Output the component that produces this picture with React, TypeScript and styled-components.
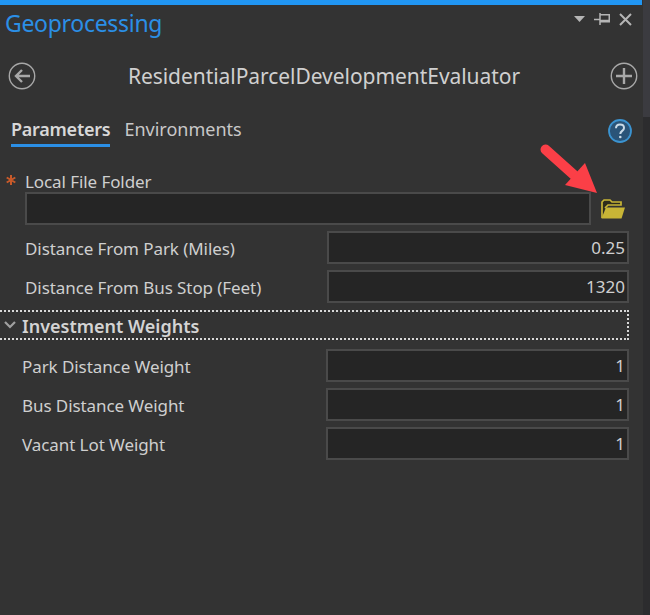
import React from "react";
import styled, { createGlobalStyle } from "styled-components";

const Global = createGlobalStyle`
  html, body { margin: 0; padding: 0; background: #333333; }
  body { font-family: "Noto Sans", "Open Sans", sans-serif; }
`;

const Window = styled.div`
  width: 650px; height: 615px; display: flex; overflow: hidden; background: #333; position: relative;
`;
const Pane = styled.div`
  width: 642px; height: 615px; flex: none; display: flex; flex-direction: column;
`;
const Gutter = styled.div`
  flex: 1; display: flex; flex-direction: column; padding-left: 1px;
`;
const GutterTop = styled.div`
  height: 117px; background: #3b3b40;
`;
const GutterBottom = styled.div`
  flex: 1; background: #2c2c2e;
`;
const TopBar = styled.div`
  height: 5px; background: #2196f3; flex: none;
`;
const TitleRow = styled.div`
  height: 36px; display: flex; align-items: center; justify-content: space-between;
  padding: 0 10px 0 5px; flex: none;
`;
const Title = styled.div`
  color: #2b8fe6; font-size: 23px; letter-spacing: -0.3px; line-height: 36px;
`;
const WindowTools = styled.div`
  display: flex; align-items: center; gap: 9px; margin-bottom: 8px;
`;
const ToolHeader = styled.div`
  height: 70px; display: flex; align-items: center; justify-content: space-between;
  padding: 0 4px 0 8px; flex: none;
`;
const ToolName = styled.div`
  color: #d0d0d0; font-size: 21px; letter-spacing: -0.05px; padding-left: 2px;
`;
const TabsRow = styled.div`
  height: 45px; display: flex; align-items: flex-start; padding: 0 10px 0 11px; flex: none;
  gap: 14px;
`;
const Tab = styled.div<{ $active?: boolean }>`
  color: ${p => (p.$active ? "#d8d8d8" : "#c8c8c8")};
  font-size: 18px; font-weight: ${p => (p.$active ? 600 : 400)};
  letter-spacing: ${p => (p.$active ? "-0.25px" : "0")};
  line-height: 24px; height: 36px; box-sizing: border-box;
  padding-top: 6px;
  border-bottom: ${p => (p.$active ? "3px solid #2b8fe6" : "none")};
`;
const HelpButton = styled.div`
  margin-left: auto; margin-top: 8px; width: 24px; height: 24px;
`;
const Fields = styled.div`
  display: flex; flex-direction: column; padding-top: 14px;
`;
const FieldLabelRow = styled.div`
  display: flex; align-items: center; height: 22px; box-sizing: border-box;
  padding: 0 0 2px 6px; gap: 9px;
`;
const Label = styled.span`
  color: #cfcfcf; font-size: 17px; white-space: nowrap; letter-spacing: -0.08px;
  position: relative; top: 1px;
`;
const FolderRow = styled.div`
  display: flex; align-items: center; padding-left: 25px; gap: 10px; height: 33px;
`;
const Input = styled.div<{ $w: number }>`
  width: ${p => p.$w}px; height: 33px; flex: none; box-sizing: border-box;
  background: #252525; border: 2px solid #4a4a4a;
  color: #cfcfcf; font-size: 17px; text-align: right; line-height: 29px;
  padding-right: 2px;
`;
const Row = styled.div<{ $indent: number }>`
  display: flex; align-items: center; justify-content: space-between;
  height: 33px; margin-top: 6px; padding-left: ${p => p.$indent}px; width: 629px;
  box-sizing: border-box;
`;
const GroupHeader = styled.div`
  display: flex; align-items: center; width: 629px; height: 30px; box-sizing: border-box;
  margin-top: 7px; gap: 6px; padding-left: 4px;
  background-image:
    repeating-linear-gradient(90deg, #d8d8d8 0 2px, transparent 2px 4px),
    repeating-linear-gradient(90deg, #d8d8d8 0 2px, transparent 2px 4px),
    repeating-linear-gradient(180deg, #d8d8d8 0 2px, transparent 2px 4px);
  background-repeat: no-repeat;
  background-size: 100% 2px, 100% 2px, 2px 100%;
  background-position: top left, bottom left, top right;
`;
const GroupTitle = styled.span`
  color: #d4d4d4; font-size: 18px; font-weight: 600; position: relative; top: 1px;
`;
const GroupBody = styled.div`
  padding-top: 3px; display: flex; flex-direction: column;
`;
const ArrowOverlay = styled.svg`
  position: absolute; left: 530px; top: 135px;
`;

function CircleBack() {
  return (
    <svg width="28" height="28" viewBox="0 0 28 28" fill="none" stroke="#a8a8a8">
      <circle cx="14" cy="14" r="12.7" strokeWidth="1.4" />
      <path d="M22 14H8M14 8l-6 6 6 6" strokeWidth="2.4" />
    </svg>
  );
}
function CirclePlus() {
  return (
    <svg width="28" height="28" viewBox="0 0 28 28" fill="none" stroke="#a8a8a8">
      <circle cx="14" cy="14" r="12.7" strokeWidth="1.4" />
      <path d="M14 6v16M6 14h16" strokeWidth="2.4" />
    </svg>
  );
}
function HelpIcon() {
  return (
    <svg width="24" height="24" viewBox="0 0 24 24">
      <circle cx="12" cy="12" r="11" fill="#2a5478" stroke="#3b93d0" strokeWidth="1.8" />
      <path d="M8 9.200C8 6.800 9.800 5.500 12 5.500C14.300 5.500 16 6.800 16 8.900C16 12 12.300 11.800 12.300 15" fill="none" stroke="#c9dbe8" strokeWidth="2" />
      <circle cx="12.300" cy="18" r="1.300" fill="#c9dbe8" />
    </svg>
  );
}
function Folder() {
  return (
    <svg width="24" height="20" viewBox="0 0 24 20">
      <path d="M1 19V3L3 1h6l2 2h9v3H7L4 9" fill="#2e2c1c" stroke="#c8b536" strokeWidth="1.7" />
      <path d="M0.500 19.500 5 8.500H24L20.500 19.500Z" fill="#c8b536" />
    </svg>
  );
}
function Chevron() {
  return (
    <svg width="12" height="8" viewBox="0 0 12 8" fill="none" stroke="#a0a0a0" strokeWidth="2.2">
      <path d="M1 1l5 5 5-5" />
    </svg>
  );
}
function RequiredStar() {
  return (
    <svg width="10" height="10" viewBox="0 0 10 10" fill="none" stroke="#c85a2a" strokeWidth="2">
      <path d="M5 0v10M0.700 2.500l8.600 5M9.300 2.500l-8.600 5" />
    </svg>
  );
}

const params = [
  ["Distance From Park (Miles)", "0.25"],
  ["Distance From Bus Stop (Feet)", "1320"],
];
const weights = [
  ["Park Distance Weight", "1"],
  ["Bus Distance Weight", "1"],
  ["Vacant Lot Weight", "1"],
];

export default function App() {
  return (
    <Window>
      <Global />
      <Pane>
        <TopBar />
        <TitleRow>
          <Title>Geoprocessing</Title>
          <WindowTools>
            <svg width="11" height="6" viewBox="0 0 11 6"><path d="M0 0h11L5.500 6z" fill="#b5b5b5" /></svg>
            <svg width="16" height="12" viewBox="0 0 16 12" fill="none" stroke="#b5b5b5" strokeWidth="1.500">
              <path d="M0 6.500h6M6 0v12M6 1.750h9.250v7H6M6 7.500h9" />
            </svg>
            <svg width="13" height="13" viewBox="0 0 13 13" fill="none" stroke="#b5b5b5" strokeWidth="2">
              <path d="M1 1l11 11M12 1L1 12" />
            </svg>
          </WindowTools>
        </TitleRow>
        <ToolHeader>
          <CircleBack />
          <ToolName>ResidentialParcelDevelopmentEvaluator</ToolName>
          <CirclePlus />
        </ToolHeader>
        <TabsRow>
          <Tab $active>Parameters</Tab>
          <Tab>Environments</Tab>
          <HelpButton><HelpIcon /></HelpButton>
        </TabsRow>
        <Fields>
          <FieldLabelRow><RequiredStar /><Label>Local File Folder</Label></FieldLabelRow>
          <FolderRow>
            <Input $w={566} />
            <Folder />
          </FolderRow>
          {params.map(([l, v]) => (
            <Row key={l} $indent={25}><Label>{l}</Label><Input $w={302}>{v}</Input></Row>
          ))}
          <GroupHeader><Chevron /><GroupTitle>Investment Weights</GroupTitle></GroupHeader>
          <GroupBody>
            {weights.map(([l, v]) => (
              <Row key={l} $indent={22}><Label>{l}</Label><Input $w={303}>{v}</Input></Row>
            ))}
          </GroupBody>
        </Fields>
      </Pane>
      <Gutter><GutterTop /><GutterBottom /></Gutter>
      <ArrowOverlay width="75" height="65" viewBox="530 135 75 65">
        <path d="M545.500 149.500L574 175" fill="none" stroke="#fb3f47" strokeWidth="10" strokeLinecap="round" />
        <path d="M585 163L597 193L565 185Z" fill="#fb3f47" />
      </ArrowOverlay>
    </Window>
  );
}
